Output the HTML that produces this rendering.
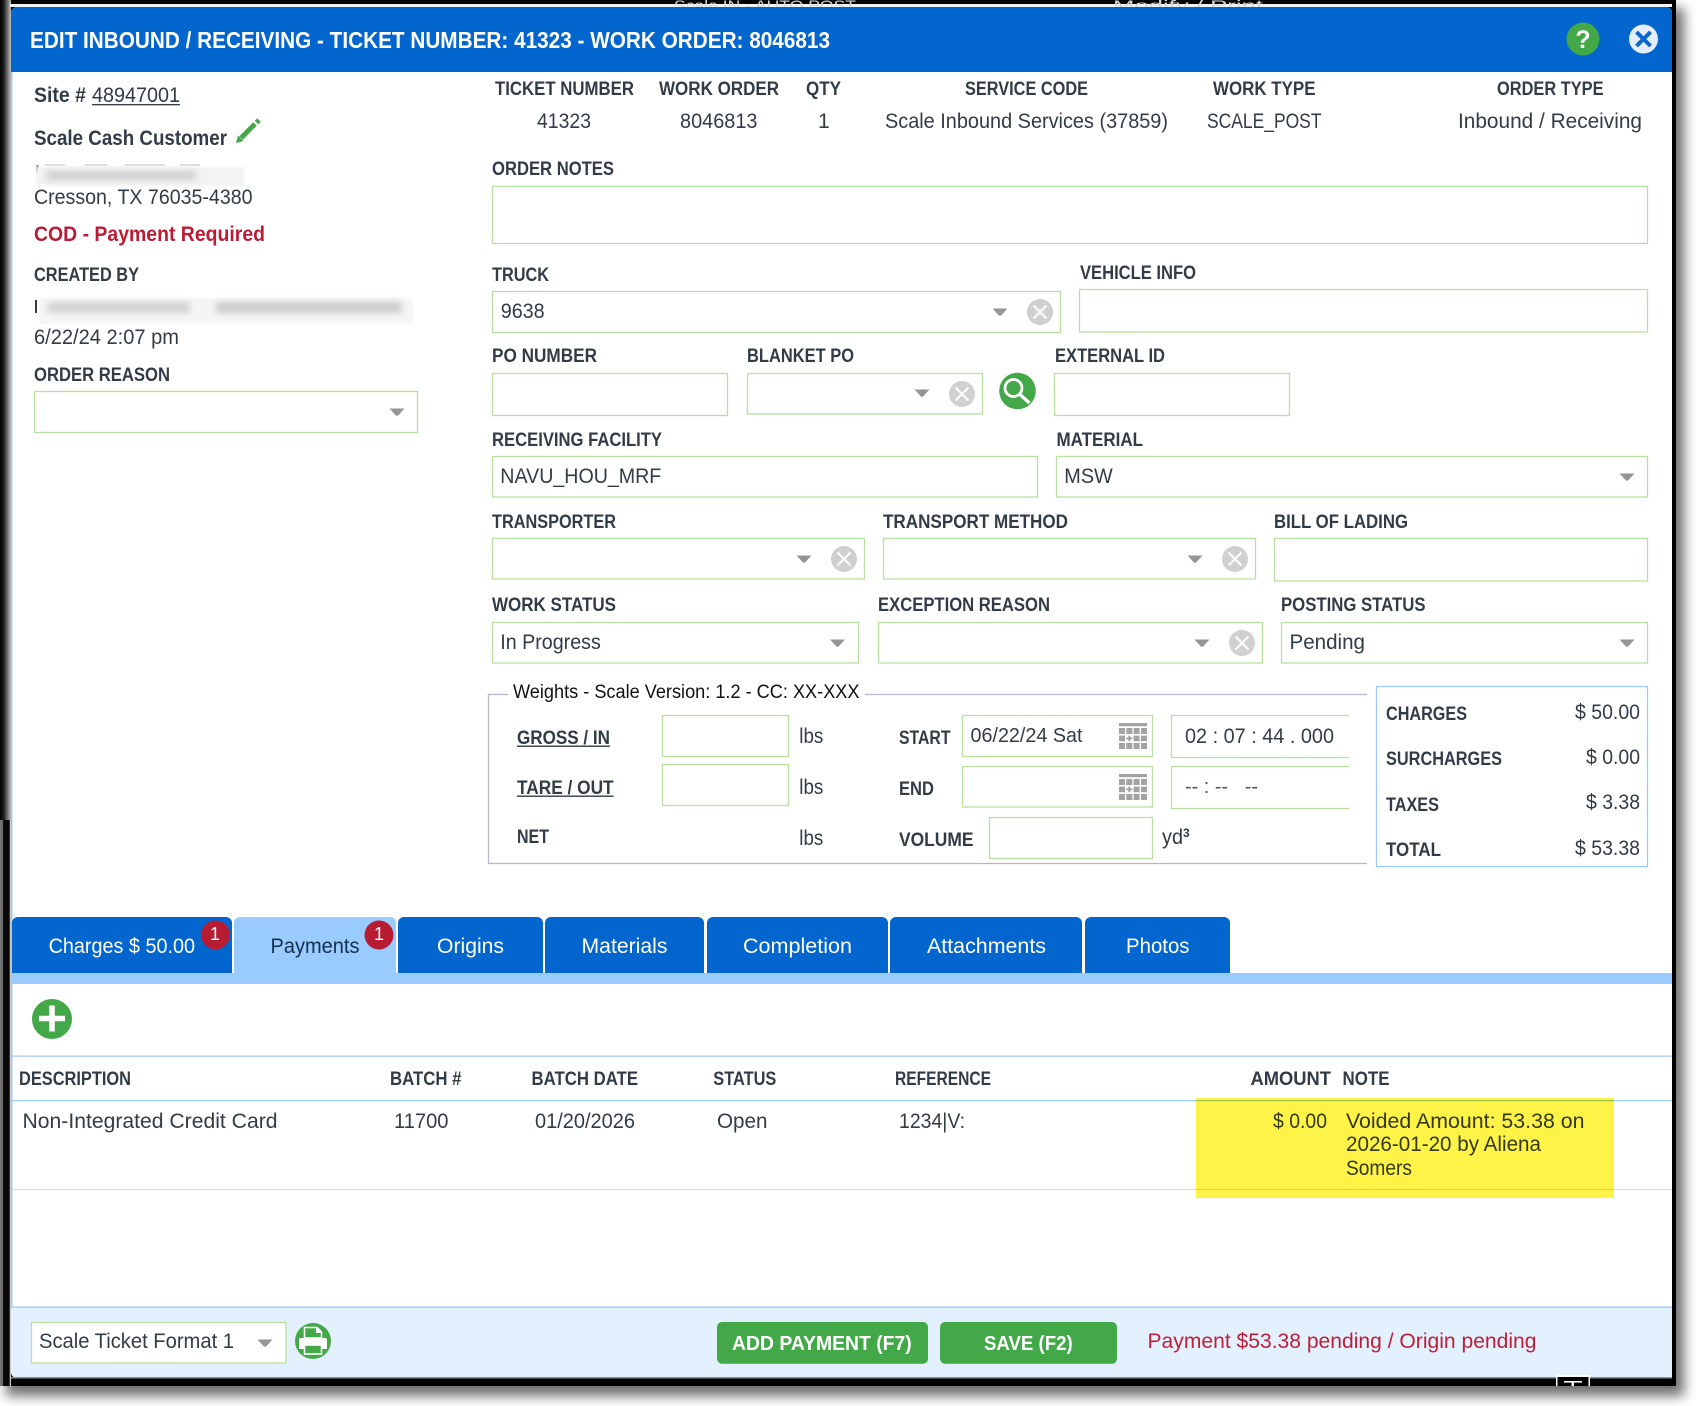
<!DOCTYPE html>
<html lang="en">
<head>
<meta charset="utf-8">
<title>Edit Inbound / Receiving</title>
<style>
html,body{margin:0;padding:0;background:#fff;width:1696px;height:1406px;overflow:hidden}
svg{display:block}
text{font-family:"Liberation Sans",Arial,sans-serif;white-space:pre}
.l{font-size:19px;font-weight:700;fill:#323c46}
.v{font-size:21px;fill:#323c46}
.t{font-size:21px;fill:#fff}
.b{fill:#fff;stroke:#b9e0a0;stroke-width:1.3}
</style>
</head>
<body>
<svg xmlns="http://www.w3.org/2000/svg" width="1696" height="1406" viewBox="0 0 1696 1406">
<defs>
<filter id="sh" x="-5%" y="-5%" width="110%" height="110%"><feGaussianBlur stdDeviation="6"/></filter>
<filter id="bl" x="-10%" y="-80%" width="120%" height="260%"><feGaussianBlur stdDeviation="3.4"/></filter>
<filter id="bs" x="-10%" y="-50%" width="120%" height="200%"><feGaussianBlur stdDeviation="1.2"/></filter>
<linearGradient id="lg" x1="0" x2="1" y1="0" y2="0"><stop offset="0" stop-color="#000"/><stop offset=".32" stop-color="#1a1a1a"/><stop offset="1" stop-color="#bdbdbd"/></linearGradient>
<linearGradient id="lg2" x1="0" x2="1" y1="0" y2="0"><stop offset="0" stop-color="#777"/><stop offset=".27" stop-color="#666"/><stop offset=".3" stop-color="#080808"/><stop offset=".85" stop-color="#080808"/><stop offset=".92" stop-color="#bbb"/><stop offset="1" stop-color="#ddd"/></linearGradient>
<g id="x"><circle r="13" fill="#d0d0d0"/><path d="M-6.5-6.5L6.5 6.5M6.5-6.5L-6.5 6.5" stroke="#fff" stroke-width="2" fill="none"/></g>
<path id="a" d="M-7.5-3.5H7.5L1 3.6H-1Z" fill="#959595"/>
<g id="cal" fill="#a3a3a3"><rect x="0" y="0" width="28" height="3.2"/>
<rect x="0" y="5" width="6" height="6"/><rect x="7.3" y="5" width="6" height="6"/><rect x="14.6" y="5" width="6" height="6"/><rect x="22" y="5" width="6" height="6"/>
<rect x="0" y="12.6" width="6" height="5.6"/><path d="M9.3 12.6h2v1.8h2v2h-2v1.8h-2v-1.8h-2v-2h2z"/><rect x="14.6" y="12.6" width="6" height="5.6"/><rect x="22" y="12.6" width="6" height="5.6"/>
<rect x="0" y="20" width="6" height="6"/><rect x="7.3" y="20" width="6" height="6"/><rect x="14.6" y="20" width="6" height="6"/><rect x="22" y="20" width="6" height="6"/></g>
</defs>

<!-- frame -->
<rect x="6" y="8" width="1678" height="1388" fill="#707070" filter="url(#sh)"/>
<rect x="0" y="0" width="1676" height="1386" fill="#000"/>
<rect x="0" y="0" width="11" height="820" fill="url(#lg)"/>
<rect x="0" y="820" width="11" height="566" fill="url(#lg2)"/>
<rect x="10" y="4" width="1666" height="3" fill="#f3f3f3"/>
<rect x="1672" y="4" width="4" height="4" fill="#000"/>
<text x="674" y="10" font-size="14" fill="#d8d8d8" textLength="182" lengthAdjust="spacingAndGlyphs">Scale IN - AUTO POST</text>
<text x="1113" y="10" font-size="14" fill="#d8d8d8" textLength="150" lengthAdjust="spacingAndGlyphs">Modify / Print</text>

<!-- dialog -->
<path d="M11 13a6 6 0 0 1 6-6H1666a6 6 0 0 1 6 6V1378H17a6 6 0 0 1-6-6Z" fill="#fff"/>
<path d="M11 13a6 6 0 0 1 6-6H1666a6 6 0 0 1 6 6V72H11Z" fill="#0366ce"/>
<rect x="11" y="72" width="1.5" height="1236" fill="#9ccbfb"/>

<text x="30" y="48" font-size="23" font-weight="700" fill="#fff" textLength="800" lengthAdjust="spacingAndGlyphs">EDIT INBOUND / RECEIVING - TICKET NUMBER: 41323 - WORK ORDER: 8046813</text>
<circle cx="1583" cy="39" r="16.5" fill="#43a848"/>
<text x="1583" y="48" font-size="25" font-weight="700" fill="#fff" text-anchor="middle">?</text>
<circle cx="1643.5" cy="39" r="14.5" fill="#e4eefa"/>
<path d="M1636.5 32L1650.5 46M1650.5 32L1636.5 46" stroke="#0a67cf" stroke-width="4" fill="none"/>

<!-- left column -->
<text class="l" x="34" y="102" style="font-size:21px" textLength="52" lengthAdjust="spacingAndGlyphs">Site #</text>
<text class="v" x="92" y="102" textLength="88" lengthAdjust="spacingAndGlyphs">48947001</text>
<rect x="92" y="104" width="88" height="1.3" fill="#323c46"/>
<text class="l" x="34" y="145" style="font-size:21px" textLength="193" lengthAdjust="spacingAndGlyphs">Scale Cash Customer</text>
<path d="M241 138L255 124" stroke="#43a848" stroke-width="5" fill="none"/>
<path d="M236 143L238 135.500L243.500 141Z" fill="#43a848"/>
<path d="M256.500 122.500L259 120" stroke="#43a848" stroke-width="5" fill="none"/>

<rect x="36" y="165" width="3" height="8" fill="#999"/>
<path d="M45 165h20M85 165h22M125 165h40M180 165h20" stroke="#dcdcdc" stroke-width="2"/>
<rect x="36" y="167" width="208" height="19" fill="#f3f3f3" filter="url(#bs)"/>
<rect x="46" y="171" width="150" height="9" fill="#cfcfcf" filter="url(#bl)"/>
<text class="v" x="34" y="204" textLength="218.500" lengthAdjust="spacingAndGlyphs">Cresson, TX 76035-4380</text>
<text class="l" x="34" y="241" style="font-size:21px;fill:#bb1c35" textLength="231" lengthAdjust="spacingAndGlyphs">COD - Payment Required</text>
<text class="l" x="34" y="281" textLength="105" lengthAdjust="spacingAndGlyphs">CREATED BY</text>
<rect x="35" y="300" width="2" height="13" fill="#323c46"/>
<rect x="39" y="298" width="374" height="26" fill="#f5f5f5" filter="url(#bs)"/>
<rect x="48" y="302" width="142" height="11" fill="#d2d2d2" filter="url(#bl)"/>
<rect x="216" y="302" width="186" height="11" fill="#cbcbcb" filter="url(#bl)"/>
<text class="v" x="34" y="344" textLength="145" lengthAdjust="spacingAndGlyphs">6/22/24 2:07 pm</text>
<text class="l" x="34" y="381" textLength="136" lengthAdjust="spacingAndGlyphs">ORDER REASON</text>
<rect class="b" x="34.500" y="391.500" width="383" height="41"/>
<use href="#a" x="397" y="412"/>

<!-- top row -->
<text class="l" x="495" y="95" textLength="139" lengthAdjust="spacingAndGlyphs">TICKET NUMBER</text>
<text class="l" x="659" y="95" textLength="120" lengthAdjust="spacingAndGlyphs">WORK ORDER</text>
<text class="l" x="806" y="95" textLength="35" lengthAdjust="spacingAndGlyphs">QTY</text>
<text class="l" x="965" y="95" textLength="123" lengthAdjust="spacingAndGlyphs">SERVICE CODE</text>
<text class="l" x="1213" y="95" textLength="102.500" lengthAdjust="spacingAndGlyphs">WORK TYPE</text>
<text class="l" x="1497" y="95" textLength="106.500" lengthAdjust="spacingAndGlyphs">ORDER TYPE</text>
<text class="v" x="537" y="128" textLength="54" lengthAdjust="spacingAndGlyphs">41323</text>
<text class="v" x="680" y="128" textLength="77.500" lengthAdjust="spacingAndGlyphs">8046813</text>
<text class="v" x="818" y="128">1</text>
<text class="v" x="885" y="128" textLength="283" lengthAdjust="spacingAndGlyphs">Scale Inbound Services (37859)</text>
<text class="v" x="1207" y="128" textLength="114.500" lengthAdjust="spacingAndGlyphs">SCALE_POST</text>
<text class="v" x="1458" y="128" textLength="184" lengthAdjust="spacingAndGlyphs">Inbound / Receiving</text>

<text class="l" x="492" y="175" textLength="122" lengthAdjust="spacingAndGlyphs">ORDER NOTES</text>
<rect class="b" x="492.500" y="186.500" width="1155" height="57"/>

<text class="l" x="492" y="281" textLength="57" lengthAdjust="spacingAndGlyphs">TRUCK</text>
<rect class="b" x="492.500" y="291.500" width="568" height="41"/>
<text class="v" x="500.700" y="318" textLength="44" lengthAdjust="spacingAndGlyphs">9638</text>
<use href="#a" x="1000" y="312"/><use href="#x" x="1040" y="312"/>
<text class="l" x="1080" y="279" textLength="116" lengthAdjust="spacingAndGlyphs">VEHICLE INFO</text>
<rect class="b" x="1079.500" y="289.500" width="568" height="42.500"/>

<text class="l" x="492" y="362" textLength="105" lengthAdjust="spacingAndGlyphs">PO NUMBER</text>
<rect class="b" x="492.500" y="373.500" width="235" height="42"/>
<text class="l" x="747" y="362" textLength="107" lengthAdjust="spacingAndGlyphs">BLANKET PO</text>
<rect class="b" x="747.500" y="373.500" width="235" height="40.500"/>
<use href="#a" x="922" y="393"/><use href="#x" x="962" y="394"/>
<circle cx="1017.500" cy="391" r="18.300" fill="#43a848"/>
<circle cx="1013.500" cy="388" r="8.500" fill="none" stroke="#fff" stroke-width="2.800"/>
<path d="M1020 394.500L1029.500 403" stroke="#fff" stroke-width="3.200" fill="none"/>
<text class="l" x="1055" y="362" textLength="110" lengthAdjust="spacingAndGlyphs">EXTERNAL ID</text>
<rect class="b" x="1054.500" y="373.500" width="235" height="42"/>

<text class="l" x="492" y="446" textLength="170" lengthAdjust="spacingAndGlyphs">RECEIVING FACILITY</text>
<rect class="b" x="492.500" y="456.500" width="545" height="40.500"/>
<text class="v" x="500.300" y="483" textLength="161" lengthAdjust="spacingAndGlyphs">NAVU_HOU_MRF</text>
<text class="l" x="1056.500" y="446" textLength="86.500" lengthAdjust="spacingAndGlyphs">MATERIAL</text>
<rect class="b" x="1056.500" y="456.500" width="591" height="40.500"/>
<text class="v" x="1064.300" y="483" textLength="48.500" lengthAdjust="spacingAndGlyphs">MSW</text>
<use href="#a" x="1627" y="477"/>

<text class="l" x="492" y="528" textLength="124" lengthAdjust="spacingAndGlyphs">TRANSPORTER</text>
<rect class="b" x="492.500" y="538.500" width="372" height="40.500"/>
<use href="#a" x="804" y="559"/><use href="#x" x="844" y="559"/>
<text class="l" x="883" y="528" textLength="185" lengthAdjust="spacingAndGlyphs">TRANSPORT METHOD</text>
<rect class="b" x="883.500" y="538.500" width="372" height="40.500"/>
<use href="#a" x="1195" y="559"/><use href="#x" x="1235" y="559"/>
<text class="l" x="1274" y="528" textLength="134" lengthAdjust="spacingAndGlyphs">BILL OF LADING</text>
<rect class="b" x="1274.500" y="538.500" width="373" height="42.500"/>

<text class="l" x="492" y="611" textLength="124" lengthAdjust="spacingAndGlyphs">WORK STATUS</text>
<rect class="b" x="492.500" y="622.500" width="366" height="40.500"/>
<text class="v" x="500.300" y="649" textLength="100.500" lengthAdjust="spacingAndGlyphs">In Progress</text>
<use href="#a" x="837.500" y="643"/>
<text class="l" x="878" y="611" textLength="172" lengthAdjust="spacingAndGlyphs">EXCEPTION REASON</text>
<rect class="b" x="878.500" y="622.500" width="384" height="40.500"/>
<use href="#a" x="1202" y="643"/><use href="#x" x="1242" y="643"/>
<text class="l" x="1281" y="611" textLength="144.500" lengthAdjust="spacingAndGlyphs">POSTING STATUS</text>
<rect class="b" x="1281.500" y="622.500" width="366" height="40.500"/>
<text class="v" x="1289.500" y="649" textLength="75.500" lengthAdjust="spacingAndGlyphs">Pending</text>
<use href="#a" x="1627" y="643"/>

<!-- weights -->
<path d="M508 694.500H488.500V863.500H1367M865 694.500H1367" fill="none" stroke="#b8b6cc" stroke-width="1.300"/>
<text x="513" y="698" font-size="19" fill="#111" textLength="346.500" lengthAdjust="spacingAndGlyphs">Weights - Scale Version: 1.2 - CC: XX-XXX</text>
<text class="l" x="517" y="744" textLength="93" lengthAdjust="spacingAndGlyphs">GROSS / IN</text>
<rect x="517" y="745.500" width="93" height="1.400" fill="#323c46"/>
<rect class="b" x="662.500" y="715.500" width="126" height="41"/>
<text class="v" x="799.300" y="743" textLength="24" lengthAdjust="spacingAndGlyphs">lbs</text>
<text class="l" x="517" y="794" textLength="96.600" lengthAdjust="spacingAndGlyphs">TARE / OUT</text>
<rect x="517" y="795.500" width="96.600" height="1.400" fill="#323c46"/>
<rect class="b" x="662.500" y="764.500" width="126" height="41"/>
<text class="v" x="799.300" y="794" textLength="24" lengthAdjust="spacingAndGlyphs">lbs</text>
<text class="l" x="517" y="843" textLength="32" lengthAdjust="spacingAndGlyphs">NET</text>
<text class="v" x="799.300" y="845" textLength="24" lengthAdjust="spacingAndGlyphs">lbs</text>

<text class="l" x="899" y="744" textLength="51.500" lengthAdjust="spacingAndGlyphs">START</text>
<rect class="b" x="962.500" y="715.500" width="190" height="41"/>
<text x="970.500" y="742" font-size="20" fill="#323c46" textLength="112" lengthAdjust="spacingAndGlyphs">06/22/24 Sat</text>
<use href="#cal" x="1119" y="723"/>
<text class="l" x="899" y="795" textLength="35" lengthAdjust="spacingAndGlyphs">END</text>
<rect class="b" x="962.500" y="766.500" width="190" height="40.500"/>
<use href="#cal" x="1119" y="774"/>
<text class="l" x="899" y="846" textLength="74.500" lengthAdjust="spacingAndGlyphs">VOLUME</text>
<rect class="b" x="989.500" y="817.500" width="163" height="41"/>
<path d="M1349 715.500H1171.500V757.500H1349M1349 766.500H1171.500V808.500H1349" fill="none" stroke="#b9e0a0" stroke-width="1.300"/>
<text class="v" x="1185" y="743" textLength="149" lengthAdjust="spacingAndGlyphs">02 : 07 : 44 . 000</text>
<text x="1185" y="793" font-size="20" fill="#555" textLength="73" lengthAdjust="spacingAndGlyphs">-- : --   --</text>
<text class="v" x="1162" y="844" textLength="21" lengthAdjust="spacingAndGlyphs">yd</text>
<text x="1183" y="837" font-size="12" font-weight="700" fill="#323c46">3</text>

<rect x="1376.500" y="686.500" width="271" height="180" fill="#fff" stroke="#99cbff" stroke-width="1.300"/>
<text class="l" x="1386" y="720" textLength="81" lengthAdjust="spacingAndGlyphs">CHARGES</text>
<text class="v" x="1575" y="719" textLength="65" lengthAdjust="spacingAndGlyphs">$ 50.00</text>
<text class="l" x="1386" y="765" textLength="116" lengthAdjust="spacingAndGlyphs">SURCHARGES</text>
<text class="v" x="1586" y="764" textLength="54" lengthAdjust="spacingAndGlyphs">$ 0.00</text>
<text class="l" x="1386" y="811" textLength="53" lengthAdjust="spacingAndGlyphs">TAXES</text>
<text class="v" x="1586" y="809" textLength="54" lengthAdjust="spacingAndGlyphs">$ 3.38</text>
<text class="l" x="1386" y="856" textLength="55" lengthAdjust="spacingAndGlyphs">TOTAL</text>
<text class="v" x="1575" y="855" textLength="65" lengthAdjust="spacingAndGlyphs">$ 53.38</text>

<!-- tabs -->
<rect x="11" y="973" width="1661" height="11" fill="#99cbff"/>
<g fill="#0366ce">
<path d="M12 973V923a6 6 0 0 1 6-6H226a6 6 0 0 1 6 6V973Z"/>
<path d="M234 973V923a6 6 0 0 1 6-6H390a6 6 0 0 1 6 6V973Z" fill="#99cbff"/>
<path d="M398 973V923a6 6 0 0 1 6-6H537a6 6 0 0 1 6 6V973Z"/>
<path d="M545 973V923a6 6 0 0 1 6-6H698a6 6 0 0 1 6 6V973Z"/>
<path d="M707 973V923a6 6 0 0 1 6-6H882a6 6 0 0 1 6 6V973Z"/>
<path d="M890 973V923a6 6 0 0 1 6-6H1076a6 6 0 0 1 6 6V973Z"/>
<path d="M1085 973V923a6 6 0 0 1 6-6H1224a6 6 0 0 1 6 6V973Z"/>
</g>
<text class="t" x="48.600" y="953" textLength="146.400" lengthAdjust="spacingAndGlyphs">Charges $ 50.00</text>
<text x="270.500" y="953" font-size="21" fill="#14304d" textLength="89" lengthAdjust="spacingAndGlyphs">Payments</text>
<text class="t" x="437" y="953" textLength="67" lengthAdjust="spacingAndGlyphs">Origins</text>
<text class="t" x="581.500" y="953" textLength="86" lengthAdjust="spacingAndGlyphs">Materials</text>
<text class="t" x="743" y="953" textLength="109" lengthAdjust="spacingAndGlyphs">Completion</text>
<text class="t" x="927" y="953" textLength="119" lengthAdjust="spacingAndGlyphs">Attachments</text>
<text class="t" x="1126" y="953" textLength="63.500" lengthAdjust="spacingAndGlyphs">Photos</text>
<circle cx="215.500" cy="935" r="14.500" fill="#b81c33"/>
<text x="215" y="940" font-size="18" fill="#fff" text-anchor="middle">1</text>
<circle cx="379" cy="935" r="14.500" fill="#b81c33"/>
<text x="379" y="940" font-size="18" fill="#fff" text-anchor="middle">1</text>

<circle cx="52" cy="1019" r="20" fill="#43a848"/>
<path d="M39 1019H65M52 1006V1032" stroke="#fff" stroke-width="5.500" fill="none" transform="translate(0 -.5)"/>

<rect x="12" y="1055.500" width="1660" height="1.200" fill="#99cbff"/>
<text class="l" x="19" y="1085" textLength="112" lengthAdjust="spacingAndGlyphs">DESCRIPTION</text>
<text class="l" x="390" y="1085" textLength="71.500" lengthAdjust="spacingAndGlyphs">BATCH #</text>
<text class="l" x="531.500" y="1085" textLength="106.500" lengthAdjust="spacingAndGlyphs">BATCH DATE</text>
<text class="l" x="713.300" y="1085" textLength="63" lengthAdjust="spacingAndGlyphs">STATUS</text>
<text class="l" x="895" y="1085" textLength="96" lengthAdjust="spacingAndGlyphs">REFERENCE</text>
<text class="l" x="1250.500" y="1085" textLength="80.500" lengthAdjust="spacingAndGlyphs">AMOUNT</text>
<text class="l" x="1342.500" y="1085" textLength="47" lengthAdjust="spacingAndGlyphs">NOTE</text>
<rect x="12" y="1100" width="1660" height="1.200" fill="#99cbff"/>
<rect x="12" y="1189" width="1660" height="1" fill="#dcdcdc"/>

<text class="v" x="22.500" y="1128" textLength="255" lengthAdjust="spacingAndGlyphs">Non-Integrated Credit Card</text>
<text class="v" x="394" y="1128" textLength="54.500" lengthAdjust="spacingAndGlyphs">11700</text>
<text class="v" x="535" y="1128" textLength="100" lengthAdjust="spacingAndGlyphs">01/20/2026</text>
<text class="v" x="717" y="1128" textLength="50.500" lengthAdjust="spacingAndGlyphs">Open</text>
<text class="v" x="899" y="1128" textLength="66" lengthAdjust="spacingAndGlyphs">1234|V:</text>
<text class="v" x="1273" y="1128" textLength="54" lengthAdjust="spacingAndGlyphs">$ 0.00</text>
<text class="v" x="1346" y="1128" textLength="238.500" lengthAdjust="spacingAndGlyphs">Voided Amount: 53.38 on</text>
<text class="v" x="1346" y="1151" textLength="195" lengthAdjust="spacingAndGlyphs">2026-01-20 by Aliena</text>
<text class="v" x="1346" y="1175" textLength="66" lengthAdjust="spacingAndGlyphs">Somers</text>
<rect x="1196" y="1098" width="418" height="100" fill="#fff347" style="mix-blend-mode:multiply"/>

<!-- footer -->
<path d="M11 1307H1672V1378H17a6 6 0 0 1-6-6Z" fill="#e3f0fd"/>
<rect x="11" y="1306.500" width="1661" height="1.300" fill="#99cbff"/>
<rect class="b" x="31.500" y="1322.500" width="254.500" height="40.500"/>
<text class="v" x="39" y="1348" textLength="195" lengthAdjust="spacingAndGlyphs">Scale Ticket Format 1</text>
<use href="#a" x="265" y="1343"/>
<circle cx="313" cy="1341" r="18" fill="#43a848"/>
<path d="M304.500 1338V1327.500H317L321.500 1332V1338Z" fill="none" stroke="#fff" stroke-width="1.600"/>
<path d="M316 1327.500V1333H321.500Z" fill="#fff"/>
<path d="M301 1338H325a2 2 0 0 1 2 2V1349H299V1340a2 2 0 0 1 2-2Z" fill="#fff"/>
<rect x="304.500" y="1345" width="17" height="9" fill="#43a848" stroke="#fff" stroke-width="1.600"/>

<rect x="717" y="1322" width="211" height="41.700" rx="5" fill="#43a848"/>
<text x="732" y="1350" font-size="20" font-weight="700" fill="#fff" textLength="179.700" lengthAdjust="spacingAndGlyphs">ADD PAYMENT (F7)</text>
<rect x="940" y="1322" width="177" height="41.700" rx="5" fill="#43a848"/>
<text x="984" y="1350" font-size="20" font-weight="700" fill="#fff" textLength="88.700" lengthAdjust="spacingAndGlyphs">SAVE (F2)</text>
<text x="1147.500" y="1348" font-size="21" fill="#bd1f39" textLength="389" lengthAdjust="spacingAndGlyphs">Payment $53.38 pending / Origin pending</text>

<rect x="11" y="1377" width="1661" height="1.500" fill="#8f8f8f"/>
<rect x="1556" y="1375" width="34" height="11" fill="#fff"/>
<rect x="1557.500" y="1377" width="31" height="9" fill="#000"/>
<rect x="1564" y="1381" width="18" height="1.600" fill="#fff"/>
<rect x="1571.500" y="1381" width="2.500" height="5" fill="#fff"/>
</svg>
</body>
</html>
